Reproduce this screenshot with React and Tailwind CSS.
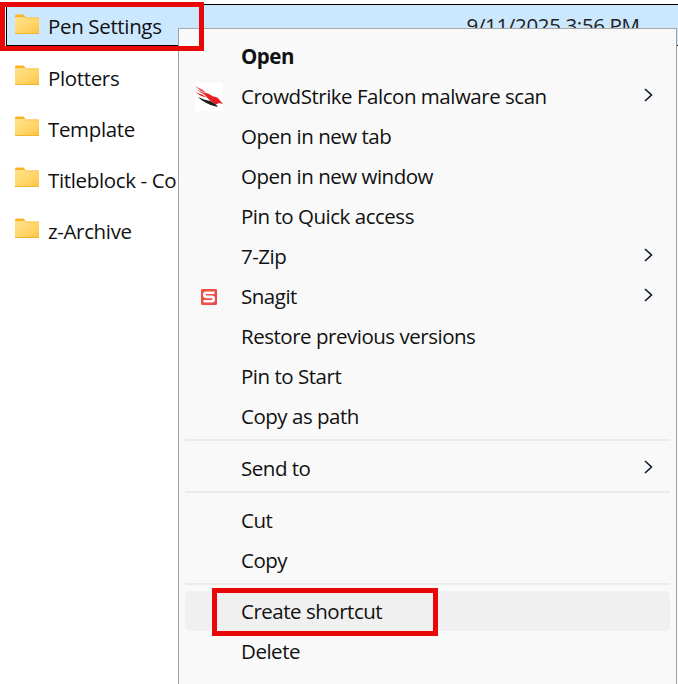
import React from "react";

function Folder() {
  return (
    <svg width="26" height="22" viewBox="0 0 26 22" className="shrink-0">
      <defs>
        <linearGradient id="fg" x1="0" y1="0" x2="1" y2="1">
          <stop offset="0" stopColor="#ffe28c" />
          <stop offset="0.6" stopColor="#ffd466" />
          <stop offset="1" stopColor="#fbc13f" />
        </linearGradient>
      </defs>
      <path d="M1 3.5C1 2.4 1.6 1.5 2.6 1.5H8.5C9.4 1.5 10 2 10.6 2.7L11.8 4.5H1Z" fill="#f8b520" />
      <rect x="1" y="4.5" width="24" height="16.5" rx="0.8" fill="url(#fg)" />
      <rect x="1" y="20" width="24" height="1" fill="#f3b431" />
      <rect x="11" y="4.5" width="14" height="0.8" fill="#f6c04a" />
    </svg>
  );
}

function Falcon() {
  return (
    <svg width="28" height="28" viewBox="0 0 28 28" className="bg-white">
      <path d="M0 3L8 7L11 10L6 8Z" fill="#e9494c" />
      <path d="M1 6L10 10.5L13 13L7 10.5Z" fill="#e9494c" />
      <path d="M0 9L8 12L12 14.5L6 13Z" fill="#d92c30" />
      <path d="M8 9.5C12 10 15 11 18 13.5C21 13.5 23.5 15 25 17.5L28 21L24 20L21 21.5C17 20 12 15 8 9.5Z" fill="#e81f25" />
      <path d="M3 14C7 16 11 17 15 18C17 19 19 20.5 21 21.5L23 24L19 23C15 22 8 19 3 14Z" fill="#1e1e1e" />
    </svg>
  );
}

function Snagit() {
  return (
    <svg width="16" height="16" viewBox="0 0 16 16">
      <defs>
        <linearGradient id="sg" x1="0" y1="0" x2="1" y2="1">
          <stop offset="0" stopColor="#f4503f" />
          <stop offset="1" stopColor="#ea4a50" />
        </linearGradient>
      </defs>
      <rect width="16" height="16" rx="1.2" fill="url(#sg)" />
      <path d="M13.5 3.8H5.4C3.9 3.8 3.2 4.6 3.2 5.8C3.2 7.1 3.9 7.9 5.4 7.9H10.6C12.1 7.9 12.8 8.7 12.8 10C12.8 11.3 12.1 12.2 10.6 12.2H2.5" fill="none" stroke="#ffffff" strokeWidth="2.6" />
    </svg>
  );
}

function Chevron() {
  return (
    <svg width="9" height="14" viewBox="0 0 9 14" className="shrink-0">
      <path d="M1 1L7.5 7L1 13" fill="none" stroke="#0b1a2b" strokeWidth="1.6" />
    </svg>
  );
}

function Item({ label, bold, icon, sub, active, low }) {
  return (
    <div className={`flex items-center h-10 mx-[6px] rounded-[5px] ${active ? "bg-[#f0f0f0]" : ""}`}>
      <div className="w-12 flex items-center justify-center shrink-0">{icon}</div>
      <span className={`pl-2 flex-1 whitespace-nowrap ${low ? "" : "-mt-[2px]"} ${bold ? "font-bold" : ""}`}>{label}</span>
      {sub && <div className={`pr-[17px] flex ${low ? "-mt-[2px]" : "-mt-[4px]"}`}><Chevron /></div>}
    </div>
  );
}

function Sep({ className }) {
  return <div className={`mx-[6px] h-[2px] bg-[#ebebeb] ${className}`} />;
}

function FileRow({ name, selected, date }) {
  return (
    <div className={`flex items-center h-[42px] mb-[9px] ${selected ? "bg-[#cce8ff] border-t border-b border-l border-black ml-[6px]" : "ml-[7px]"}`}>
      <div className="ml-[7px] w-[26px] flex -mt-[3px]"><Folder /></div>
      <span className={`ml-[8px] whitespace-nowrap text-[#111] ${selected ? "mt-[3px]" : "mt-[5px]"}`}>{name}</span>
      {date && <span className="ml-[305px] whitespace-nowrap text-[#222]">{date}</span>}
    </div>
  );
}

export default function App() {
  return (
    <div className="relative w-[678px] h-[684px] overflow-hidden bg-white text-[20.5px] text-[#111] font-['Open_Sans',sans-serif] tracking-[-0.35px]">
      <div className="pt-1">
        <FileRow name="Pen Settings" selected date="9/11/2025 3:56 PM" />
        <FileRow name="Plotters" />
        <FileRow name="Template" />
        <FileRow name="Titleblock - Co" />
        <FileRow name="z-Archive" />
      </div>

      <div className="absolute left-[178px] top-[28px] w-[499px] h-[656px] bg-[#f9f9f9] border border-b-0 border-x-[#a0a0a0] border-t-[#a8a8a8] pt-2 tracking-[-0.48px]">
        <Item label="Open" bold />
        <Item label="CrowdStrike Falcon malware scan" icon={<Falcon />} sub />
        <Item label="Open in new tab" />
        <Item label="Open in new window" />
        <Item label="Pin to Quick access" />
        <Item label="7-Zip" sub />
        <Item label="Snagit" icon={<Snagit />} sub />
        <Item label="Restore previous versions" />
        <Item label="Pin to Start" />
        <Item label="Copy as path" />
        <Sep className="mt-[2px] mb-[7px]" />
        <Item label="Send to" sub low />
        <Sep className="mt-[3px] mb-[7px]" />
        <Item label="Cut" low />
        <Item label="Copy" low />
        <Sep className="mt-[3px] mb-[6px]" />
        <Item label="Create shortcut" active low />
        <Item label="Delete" low />
      </div>

      <div className="absolute left-0 top-[2px] w-[204px] h-[49px] border-[5px] border-[#e80808]" />
      <div className="absolute left-[212px] top-[588px] w-[226px] h-[48px] border-[5px] border-[#e80808]" />
    </div>
  );
}
